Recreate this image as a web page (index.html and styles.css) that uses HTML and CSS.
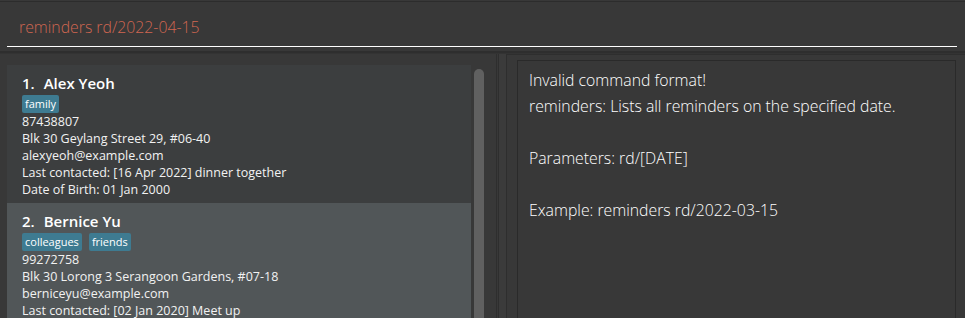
FILE: index.html
```html
<!DOCTYPE html>
<html>
<head>
<meta charset="utf-8">
<link rel="stylesheet" href="styles.css">
</head>
<body>
<div class="app">
  <div class="command-pane">
    <div class="command-box">reminders rd/2022-04-15</div>
  </div>
  <div class="separator"></div>
  <div class="main">
    <div class="list-panel">
      <div class="list">
        <div class="card card-even">
          <div class="name"><span class="idx">1.</span><span>Alex Yeoh</span></div>
          <div class="tags"><span class="tag">family</span></div>
          <div class="small">87438807</div>
          <div class="small">Blk 30 Geylang Street 29, #06-40</div>
          <div class="small">alexyeoh@example.com</div>
          <div class="small">Last contacted: [16 Apr 2022] dinner together</div>
          <div class="small">Date of Birth: 01 Jan 2000</div>
        </div>
        <div class="card card-odd">
          <div class="name"><span class="idx">2.</span><span>Bernice Yu</span></div>
          <div class="tags"><span class="tag">colleagues</span><span class="tag">friends</span></div>
          <div class="small">99272758</div>
          <div class="small">Blk 30 Lorong 3 Serangoon Gardens, #07-18</div>
          <div class="small">berniceyu@example.com</div>
          <div class="small">Last contacted: [02 Jan 2020] Meet up</div>
        </div>
      </div>
      <div class="scroll-track"><div class="scroll-thumb"></div></div>
    </div>
    <div class="divider"></div>
    <div class="result-panel">
      <div class="result-box">
        <div class="line">Invalid command format!</div>
        <div class="line">reminders: Lists all reminders on the specified date.</div>
        <div class="line">&nbsp;</div>
        <div class="line">Parameters: rd/[DATE]</div>
        <div class="line">&nbsp;</div>
        <div class="line">Example: reminders rd/2022-03-15</div>
      </div>
    </div>
  </div>
</div>
</body>
</html>
```

FILE: styles.css
```css
html, body {
  margin: 0;
  padding: 0;
  background: #383838;
}
.app {
  width: 965px;
  height: 318px;
  overflow: hidden;
  background: #383838;
  display: flex;
  flex-direction: column;
  font-family: "Open Sans", "Noto Sans", sans-serif;
  color: #ffffff;
}
.command-pane {
  margin-top: 1px;
  border-top: 1px solid #2c2c2c;
  padding: 0 8px 0 7px;
  height: 50px;
  box-sizing: border-box;
}
.command-box {
  height: 45px;
  box-sizing: border-box;
  border-bottom: 1px solid #ffffff;
  padding: 14px 0 0 12px;
  font-size: 15.8px;
  line-height: 22px;
  font-weight: 300;
  color: #d06651;
}
.separator {
  height: 2px;
  background: #2e2e2e;
  border-bottom: 1px solid #333333;
}
.main {
  flex: 1;
  display: flex;
  min-height: 0;
}
.list-panel {
  width: 489px;
  padding: 11px 0 0 7px;
  border-right: 1px solid #2e2e2e;
  display: flex;
  gap: 3px;
}
.list {
  width: 464px;
  display: flex;
  flex-direction: column;
}
.card {
  padding: 8px 0 5px 15px;
  color: #f2f2f2;
}
.card-even { background: #3c3e3f; }
.card-odd { background: #515658; }
.name {
  display: flex;
  gap: 9px;
  font-size: 15px;
  font-weight: 600;
  line-height: 20px;
  color: #ffffff;
}
.tags {
  display: flex;
  gap: 7px;
  margin-top: 2px;
}
.tag {
  background: #3e7b91;
  color: #ffffff;
  font-size: 11px;
  line-height: 16px;
  padding: 1px 3px;
  border-radius: 2px;
}
.small {
  font-size: 12.5px;
  line-height: 17px;
}
.scroll-track {
  width: 10px;
  padding-top: 4px;
}
.scroll-thumb {
  height: 100%;
  background: #606060;
  border-radius: 5px 5px 0 0;
}
.divider {
  width: 7px;
  margin-left: 1px;
  border-left: 1px solid #2e2e2e;
  border-right: 1px solid #2e2e2e;
  background: #3b3b3b;
}
.result-panel {
  flex: 1;
  padding: 5px 9px 0 10px;
  border-top: 1px solid #2e2e2e;
}
.result-box {
  height: 100%;
  box-sizing: border-box;
  border: 1px solid #2a2a2a;
  border-bottom: none;
  padding: 6px 0 0 11px;
}
.line {
  font-size: 15.8px;
  font-weight: 300;
  line-height: 26px;
}
```
